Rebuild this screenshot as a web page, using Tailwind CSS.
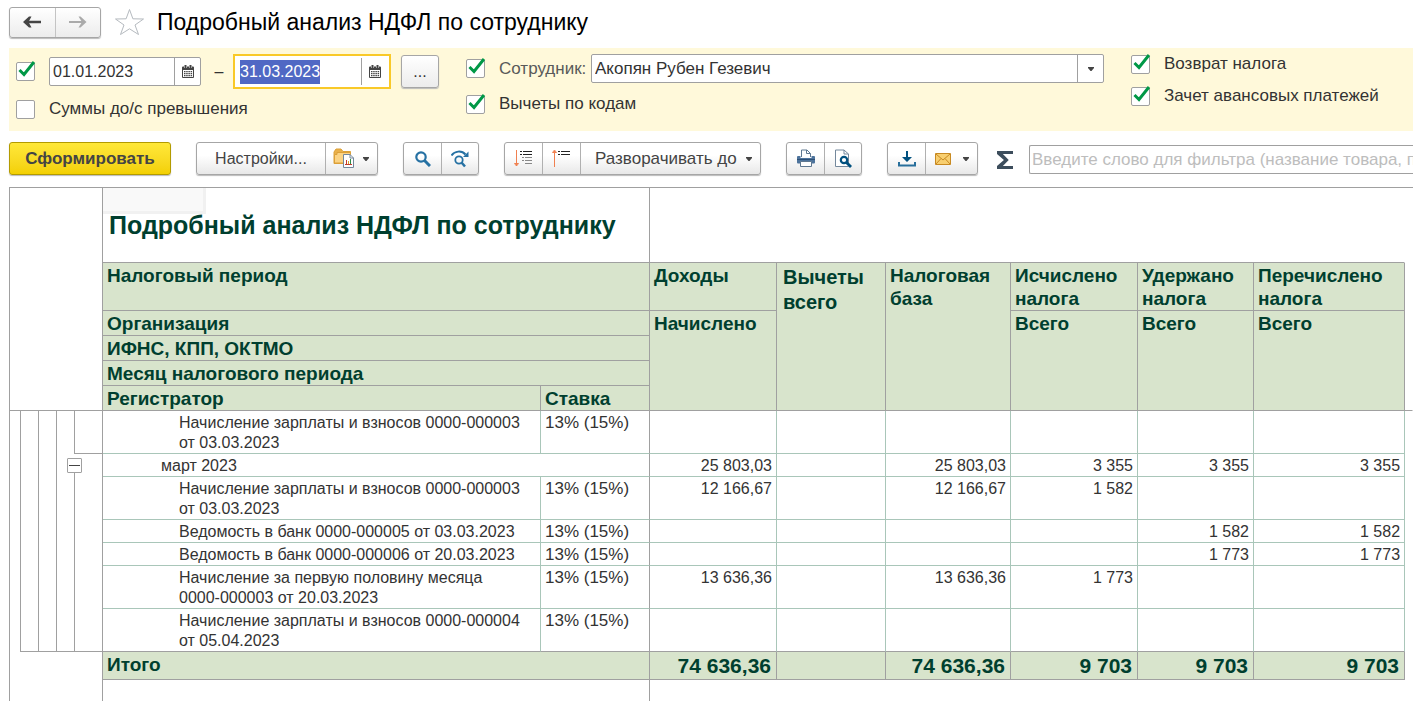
<!DOCTYPE html>
<html lang="ru">
<head>
<meta charset="utf-8">
<title>Подробный анализ НДФЛ по сотруднику</title>
<script src="https://cdn.jsdelivr.net/npm/@tailwindcss/browser@4"></script>
</head>
<body class="flex min-h-screen flex-col overflow-x-hidden bg-white pl-[9px] font-['Liberation_Sans',Arial,sans-serif] text-base leading-5 text-[#333]">

<!-- Shared symbols -->
<svg class="hidden">
  <symbol id="check" viewBox="0 0 20 20"><path d="M3.500 9L8 13.500L18 1" fill="none" stroke="#009846" stroke-width="3"/></symbol>
  <symbol id="calendar" viewBox="0 0 12 13"><path fill="#444" fill-rule="evenodd" d="M1 1.500H11Q12 1.500 12 2.500V12Q12 13 11 13H1Q0 13 0 12V2.500Q0 1.500 1 1.500ZM1 5V12H11V5Z"/><path d="M2 0H5V3H2ZM7 0H10V3H7Z" fill="#fff"/><path fill="#444" d="M2.500 0h2v3h-2zM7.500 0h2v3h-2zM2 6h1.500v1.200H2zM4.200 6h1.500v1.200H4.200zM6.400 6h1.500v1.200H6.400zM8.600 6h1.500v1.200H8.600zM2 8h1.500v1.200H2zM4.200 8h1.500v1.200H4.200zM6.400 8h1.500v1.200H6.400zM8.600 8h1.500v1.200H8.600zM2 10h1.500v1.200H2zM4.200 10h1.500v1.200H4.200zM6.400 10h1.500v1.200H6.400zM8.600 10h1.500v1.200H8.600z"/></symbol>
  <symbol id="caret" viewBox="0 0 6 4"><path d="M0 0h6v1L3.500 4h-1L0 1z" fill="#444"/></symbol>
</svg>

<header class="flex h-12 items-center pb-1">
  <div class="flex h-[31px] w-[92px] rounded-[3px] border border-[#a6a6a6] bg-gradient-to-b from-white to-[#ececec] shadow-[0_1px_1px_#bbb]">
    <button aria-label="Назад" class="grid flex-1 place-items-center border-r border-[#c4c4c4]"><svg width="18" height="12" viewBox="0 0 18 12"><path d="M3 6H18" fill="none" stroke="#444" stroke-width="2.500"/><path d="M0 6L6 .5H8.500L5.500 6L8.500 11.500H6Z" fill="#444"/></svg></button>
    <button aria-label="Вперед" class="grid flex-1 place-items-center"><svg width="18" height="12" viewBox="0 0 18 12"><path d="M0 6H15" fill="none" stroke="#aaa" stroke-width="2"/><path d="M17.500 6L11.500 .5H9.500L13 6L9.500 11.500H11.500Z" fill="#aaa"/></svg></button>
  </div>
  <button aria-label="В избранное" class="ml-[13px]"><svg width="31" height="28" viewBox="0 0 31 28"><path d="M15.500 1.500L18.900 10.800L29.500 11L21 17L24.500 26.500L15.500 20.800L6.500 26.500L10 17L1.500 11L12.100 10.800Z" fill="#fff" stroke="#b5babf"/></svg></button>
  <h1 class="ml-3 text-[23px] leading-7 text-black">Подробный анализ НДФЛ по сотруднику</h1>
</header>

<section class="flex h-[83px] bg-[#fff9da] pl-[7px] text-[17px]">
  <div class="flex w-[450px] flex-col pt-[6px]">
    <div class="flex h-[35px] items-center text-base">
      <span class="relative mr-[14px] h-[19px] w-[19px]"><input type="checkbox" checked aria-label="Период" class="block h-[19px] w-[19px] appearance-none rounded-[2px] border border-[#a0a0a0] bg-white"><svg class="pointer-events-none absolute -top-px left-0 h-5 w-5"><use href="#check"/></svg></span>
      <div class="flex h-[29px] w-[152px] rounded-[2px] border border-[#a0a0a0] bg-white"><input type="text" value="01.01.2023" aria-label="Начало периода" class="w-0 flex-1 pl-[3px] outline-none"><button aria-label="Выбрать начало" class="grid w-[26px] place-items-center border-l border-[#a0a0a0]"><svg width="12" height="13"><use href="#calendar"/></svg></button></div>
      <span class="w-8 pl-1 text-center">–</span>
      <div class="flex h-[35px] w-[158px] border-2 border-[#f9c928] bg-white p-[2px]"><input id="to" type="text" value="31.03.2023" aria-label="Конец периода" class="w-0 flex-1 pl-[3px] caret-transparent outline-none selection:bg-[#5068c4] selection:text-white"><button aria-label="Выбрать конец" class="grid w-[26px] place-items-center border-l border-[#a0a0a0]"><svg width="12" height="13"><use href="#calendar"/></svg></button></div>
      <button aria-label="Выбрать период" class="ml-[10px] h-[33px] w-[38px] rounded-[3px] border border-[#a6a6a6] bg-gradient-to-b from-white to-[#ececec] shadow-[0_1px_1px_#bbb]">...</button>
    </div>
    <label class="mt-[10px] flex items-center"><input type="checkbox" class="mr-[14px] h-[19px] w-[19px] appearance-none rounded-[2px] border border-[#a0a0a0] bg-white">Суммы до/с превышения</label>
  </div>
  <div class="flex w-[665px] flex-col pt-[6px]">
    <div class="flex h-[29px] items-center">
      <span class="relative mr-[14px] h-[19px] w-[19px]"><input id="emp" type="checkbox" checked class="block h-[19px] w-[19px] appearance-none rounded-[2px] border border-[#a0a0a0] bg-white"><svg class="pointer-events-none absolute -top-px left-0 h-5 w-5"><use href="#check"/></svg></span>
      <label for="emp" class="w-[92px] text-[#595959]">Сотрудник:</label>
      <div class="relative h-[29px] w-[513px]">
        <select aria-label="Сотрудник" class="h-full w-full appearance-none rounded-[2px] border border-[#a0a0a0] bg-white pl-[3px]"><option>Акопян Рубен Гезевич</option></select>
        <span class="pointer-events-none absolute inset-y-px right-px grid w-[26px] place-items-center border-l border-[#a0a0a0]"><svg width="6" height="4"><use href="#caret"/></svg></span>
      </div>
    </div>
    <label class="mt-[11px] flex items-center"><span class="relative mr-[14px] h-[19px] w-[19px]"><input type="checkbox" checked class="block h-[19px] w-[19px] appearance-none rounded-[2px] border border-[#a0a0a0] bg-white"><svg class="pointer-events-none absolute -top-px left-0 h-5 w-5"><use href="#check"/></svg></span>Вычеты по кодам</label>
  </div>
  <div class="flex flex-col gap-3 pt-[6px]">
    <label class="flex items-center"><span class="relative mr-[14px] h-[19px] w-[19px]"><input type="checkbox" checked class="block h-[19px] w-[19px] appearance-none rounded-[2px] border border-[#a0a0a0] bg-white"><svg class="pointer-events-none absolute -top-px left-0 h-5 w-5"><use href="#check"/></svg></span>Возврат налога</label>
    <label class="flex items-center"><span class="relative mr-[14px] h-[19px] w-[19px]"><input type="checkbox" checked class="block h-[19px] w-[19px] appearance-none rounded-[2px] border border-[#a0a0a0] bg-white"><svg class="pointer-events-none absolute -top-px left-0 h-5 w-5"><use href="#check"/></svg></span>Зачет авансовых платежей</label>
  </div>
</section>

<nav class="flex h-14 items-center gap-[25px] pb-px text-[#444]">
  <button class="h-[33px] w-[162px] shrink-0 rounded-[3px] border border-[#b39b00] bg-gradient-to-b from-[#ffe838] to-[#f3d000] text-[17px] font-bold shadow-[0_1px_1px_#bbb]">Сформировать</button>
  <div class="flex h-[33px] w-[182px] shrink-0 rounded-[3px] border border-[#a6a6a6] bg-gradient-to-b from-white from-40% to-[#e8e8e8] shadow-[0_1px_1px_#bbb]">
    <button class="w-[129px] border-r border-[#b0b0b0]">Настройки...</button>
    <button aria-label="Варианты отчета" class="flex flex-1 items-center gap-2 pl-[7px]"><svg width="22" height="21" viewBox="0 0 22 21"><path d="M1 15.500V4L3 1H8L10 3.500H17.500V15.500Z" fill="#e9b04a" stroke="#dca038"/><path d="M1.500 15V6.500H4V4.500H17.500V15Z" fill="#fbd384" stroke="#dca038"/><path d="M10.500 6.500H17L20.500 10V19.500H10.500Z" fill="#fff" stroke="#74889c"/><path d="M17 6.500V10H20.500" fill="none" stroke="#74889c"/><path d="M13.500 12V16M12 16.500H19" stroke="#c33b2d" fill="none"/><path d="M15.500 13V16" stroke="#d9a62d"/><path d="M17.500 11V16" stroke="#2e8b46"/></svg><svg width="6" height="4"><use href="#caret"/></svg></button>
  </div>
  <div class="flex h-[33px] w-[76px] shrink-0 rounded-[3px] border border-[#a6a6a6] bg-gradient-to-b from-white from-40% to-[#e8e8e8] shadow-[0_1px_1px_#bbb]">
    <button aria-label="Найти" class="grid w-[38px] place-items-center border-r border-[#b0b0b0]"><svg width="16" height="16" viewBox="0 0 16 16" fill="none" stroke="#2671a3"><circle cx="6" cy="6" r="4.700" stroke-width="2.200"/><path d="M9.500 9.500L15 15" stroke-width="3"/></svg></button>
    <button aria-label="Найти далее" class="grid flex-1 place-items-center"><svg width="18" height="18" viewBox="0 0 18 18" fill="none" stroke="#2671a3"><path d="M.5 5.500C3.500 1 10.500 0 14.500 4.500" stroke-width="2"/><path d="M17.500 1.500V7H12Z" fill="#2671a3" stroke="none"/><circle cx="8" cy="10" r="3.700" stroke-width="1.800"/><path d="M10.500 12.500L14 16.500" stroke-width="2.500"/></svg></button>
  </div>
  <div class="flex h-[33px] w-[257px] shrink-0 rounded-[3px] border border-[#a6a6a6] bg-gradient-to-b from-white from-40% to-[#e8e8e8] shadow-[0_1px_1px_#bbb]">
    <button aria-label="Развернуть" class="grid w-[38px] place-items-center border-r border-[#b0b0b0]"><svg width="19" height="19" viewBox="0 0 19 19" fill="none"><path d="M2.500 1V17M.5 14.500H4.500L2.500 17Z" stroke="#f08050"/><path d="M6 2.500H8M9 2.500H18M6 5.500H8M9 5.500H18" stroke="#222"/><path d="M8 8.500H10M11 8.500H18M8 11.500H10M11 11.500H18M11 14.500H18" stroke="#888"/></svg></button>
    <button aria-label="Свернуть" class="grid w-[38px] place-items-center border-r border-[#b0b0b0]"><svg width="19" height="19" viewBox="0 0 19 19" fill="none"><path d="M2.500 2V18M.5 3.500H4.500L2.500 1Z" stroke="#f08050"/><path d="M6 2.500H8M9 2.500H18M6 5.500H8M9 5.500H18" stroke="#222"/></svg></button>
    <button class="flex flex-1 items-center justify-between pr-[8px] pl-[14px] text-[17px]">Разворачивать до<svg width="6" height="4"><use href="#caret"/></svg></button>
  </div>
  <div class="flex h-[33px] w-[76px] shrink-0 rounded-[3px] border border-[#a6a6a6] bg-gradient-to-b from-white from-40% to-[#e8e8e8] shadow-[0_1px_1px_#bbb]">
    <button aria-label="Печать" class="grid w-[38px] place-items-center border-r border-[#b0b0b0]"><svg width="18" height="19" viewBox="0 0 18 19"><path d="M4.500 8V1H10L13.500 4.500V8" fill="#fff" stroke="#5f7891"/><path d="M9.500 1V4.500H13.500" fill="none" stroke="#5f7891"/><path d="M1 7H3.500V9H14.500V7H17Q18 7 18 8V13.500Q18 14.500 17 14.500H1Q0 14.500 0 13.500V8Q0 7 1 7Z" fill="#4d739c"/><path d="M0 10.500H18" stroke="#2d4f75"/><path d="M3.500 12.500H14.500V17.500H3.500Z" fill="#fff" stroke="#5f7891"/></svg></button>
    <button aria-label="Предварительный просмотр" class="grid flex-1 place-items-center"><svg width="18" height="19" viewBox="0 0 18 19" fill="none"><path d="M1.500 1H10L14.500 5V17.500H1.500Z" fill="#fff" stroke="#74889c"/><path d="M10 1V5H14.500" stroke="#74889c"/><circle cx="10" cy="11" r="3.200" fill="#fff" stroke="#00507f" stroke-width="2.200"/><path d="M12.500 13.500L17 18" stroke="#00507f" stroke-width="2.800"/></svg></button>
  </div>
  <div class="flex h-[33px] w-[91px] shrink-0 rounded-[3px] border border-[#a6a6a6] bg-gradient-to-b from-white from-40% to-[#e8e8e8] shadow-[0_1px_1px_#bbb]">
    <button aria-label="Сохранить" class="grid w-[38px] place-items-center border-r border-[#b0b0b0]"><svg width="18" height="16" viewBox="0 0 18 16"><path d="M8 0H10V6H14L9 11L4 6H8Z" fill="#00507f"/><path d="M1 11V14.500H17V11" fill="none" stroke="#286f9b" stroke-width="2"/></svg></button>
    <button aria-label="Отправить" class="flex flex-1 items-center gap-[12px] pl-[9px]"><svg width="16" height="12" viewBox="0 0 16 12"><path d="M.5 .5H15.500V11.500H.5Z" fill="#f8cf70" stroke="#c88a22"/><path d="M1 1L8 7L15 1M1 11L6 5.500M15 11L10 5.500" fill="none" stroke="#c88a22"/></svg><svg width="6" height="4"><use href="#caret"/></svg></button>
  </div>
  <div class="-ml-[6px] flex min-w-0 flex-1 items-center gap-4 pt-[2px]">
    <button aria-label="Сумма" class="shrink-0"><svg width="16" height="18" viewBox="0 0 15 18" preserveAspectRatio="none"><path d="M0 0H15V3H5.500L11 9L5.500 15H15V18H0V15L6.500 9L0 3Z" fill="#3c4d5c"/></svg></button>
    <input type="text" aria-label="Фильтр" placeholder="Введите слово для фильтра (название товара, покупателя и пр.)" class="h-[29px] w-0 flex-1 rounded-l-[2px] border border-r-0 border-[#a0a0a0] pl-[2px] text-[17px] outline-none placeholder:text-[#bdbdbd]">
  </div>
</nav>

<main class="flex flex-1 border-t border-l border-[#a0a0a0]">
  <!-- Group outline -->
  <div class="flex w-[93px] shrink-0 flex-col border-r border-[#a0a0a0]">
    <div class="h-[223px] border-b border-[#a0a0a0]"></div>
    <div class="relative ml-[10px] flex h-[241px] border-b border-l border-[#a0a0a0]">
      <div class="w-[18px] border-r border-[#a0a0a0]"></div>
      <div class="w-[18px] border-r border-[#a0a0a0]"></div>
      <div class="w-[17px]"></div>
      <div class="flex flex-1 flex-col">
        <div class="h-[43px] border-b border-l border-[#a0a0a0]"></div>
        <div class="mt-[19px] flex-1 border-l border-[#a0a0a0]"></div>
      </div>
      <button aria-label="Свернуть группу" class="absolute top-[47px] left-[46px] grid h-[15px] w-[15px] place-items-center rounded-[1px] border border-[#a0a0a0] bg-white"><span class="h-px w-[11px] bg-[#444]"></span></button>
    </div>
  </div>

  <table class="w-full table-fixed border-separate border-spacing-0 text-right [&_td]:border-r [&_td]:border-b [&_td]:pt-[2px] [&_td]:pr-[4px] [&_td]:pb-0 [&_td]:pl-[4px] [&_td]:align-top [&_th]:border-r [&_th]:border-b [&_th]:border-[#a0a0a0] [&_th]:pt-px [&_th]:pr-0 [&_th]:pb-0 [&_th]:pl-[4px] [&_th]:text-left [&_th]:align-top">
    <colgroup><col class="w-[438px]"><col class="w-[109px]"><col class="w-[127px]"><col class="w-[109px]"><col class="w-[125px]"><col class="w-[127px]"><col class="w-[116px]"><col class="w-[151px]"><col></colgroup>
    <thead class="text-[19px] leading-[23px] text-[#003f2f]">
      <tr class="h-[75px]">
        <th colspan="2" class="relative"><span class="absolute top-0 left-0 h-[26px] w-[103px] border-r-3 border-b-3 border-[#f1f1f1] bg-[#f9f9f9]"></span><h2 class="relative pt-[22px] pl-[2px] text-[25px] leading-[29px]">Подробный анализ НДФЛ по сотруднику</h2></th>
        <th colspan="6" class="border-r-transparent!"></th><th class="border-transparent!"></th>
      </tr>
      <tr class="h-12 bg-[#d8e4cc]">
        <th colspan="2">Налоговый период</th><th>Доходы</th>
        <th rowspan="5" class="pt-[2px]! pl-[6px]! text-[20px] leading-[25px]">Вычеты всего</th>
        <th rowspan="5">Налоговая база</th><th>Исчислено налога</th><th>Удержано налога</th><th>Перечислено налога</th>
        <th rowspan="5" class="border-r-transparent! bg-white"></th>
      </tr>
      <tr class="h-[25px] bg-[#d8e4cc]"><th colspan="2">Организация</th><th rowspan="4">Начислено</th><th rowspan="4">Всего</th><th rowspan="4">Всего</th><th rowspan="4">Всего</th></tr>
      <tr class="h-[25px] bg-[#d8e4cc]"><th colspan="2">ИФНС, КПП, ОКТМО</th></tr>
      <tr class="h-[25px] bg-[#d8e4cc]"><th colspan="2">Месяц налогового периода</th></tr>
      <tr class="h-[25px] bg-[#d8e4cc]"><th>Регистратор</th><th>Ставка</th></tr>
    </thead>
    <tbody class="[&_td]:border-[#a9c6b9] [&_td:first-child]:pr-0 [&_td:first-child]:text-left [&_td:last-child]:border-transparent [&_td:nth-last-child(8)]:border-r-[#a0a0a0] [&_tr:last-child>td:not(:last-child)]:border-b-[#a0a0a0]">
      <tr class="h-[43px]"><td class="pl-[76px]!">Начисление зарплаты и взносов 0000-000003 от 03.03.2023</td><td class="text-left text-[17px]">13% (15%)</td><td></td><td></td><td></td><td></td><td></td><td></td><td></td></tr>
      <tr class="h-[23px]"><td colspan="2" class="pl-[58px]!">март 2023</td><td>25 803,03</td><td></td><td>25 803,03</td><td>3 355</td><td>3 355</td><td>3 355</td><td></td></tr>
      <tr class="h-[43px]"><td class="pl-[76px]!">Начисление зарплаты и взносов 0000-000003 от 03.03.2023</td><td class="text-left text-[17px]">13% (15%)</td><td>12 166,67</td><td></td><td>12 166,67</td><td>1 582</td><td></td><td></td><td></td></tr>
      <tr class="h-[23px]"><td class="pl-[76px]!">Ведомость в банк 0000-000005 от 03.03.2023</td><td class="text-left text-[17px]">13% (15%)</td><td></td><td></td><td></td><td></td><td>1 582</td><td>1 582</td><td></td></tr>
      <tr class="h-[23px]"><td class="pl-[76px]!">Ведомость в банк 0000-000006 от 20.03.2023</td><td class="text-left text-[17px]">13% (15%)</td><td></td><td></td><td></td><td></td><td>1 773</td><td>1 773</td><td></td></tr>
      <tr class="h-[43px]"><td class="pl-[76px]!">Начисление за первую половину месяца<br>0000-000003 от 20.03.2023</td><td class="text-left text-[17px]">13% (15%)</td><td>13 636,36</td><td></td><td>13 636,36</td><td>1 773</td><td></td><td></td><td></td></tr>
      <tr class="h-[43px]"><td class="pl-[76px]!">Начисление зарплаты и взносов 0000-000004 от 05.04.2023</td><td class="text-left text-[17px]">13% (15%)</td><td></td><td></td><td></td><td></td><td></td><td></td><td></td></tr>
    </tbody>
    <tfoot class="text-[21px] leading-[25px] font-bold text-[#003f2f] [&_td]:border-[#a0a0a0] [&_td]:pt-px [&_td]:pr-[5px]">
      <tr class="h-7 bg-[#d8e4cc]"><th colspan="2" class="text-[19px] leading-[23px]">Итого</th><td>74 636,36</td><td></td><td>74 636,36</td><td>9 703</td><td>9 703</td><td>9 703</td><td class="border-transparent! bg-white"></td></tr>
      <tr class="h-[22px]"><td colspan="2" class="border-b-0"></td><td colspan="7" class="border-transparent!"></td></tr>
    </tfoot>
  </table>
</main>

<script>
  const to = document.getElementById('to');
  to.focus();
  to.select();
</script>
</body>
</html>
